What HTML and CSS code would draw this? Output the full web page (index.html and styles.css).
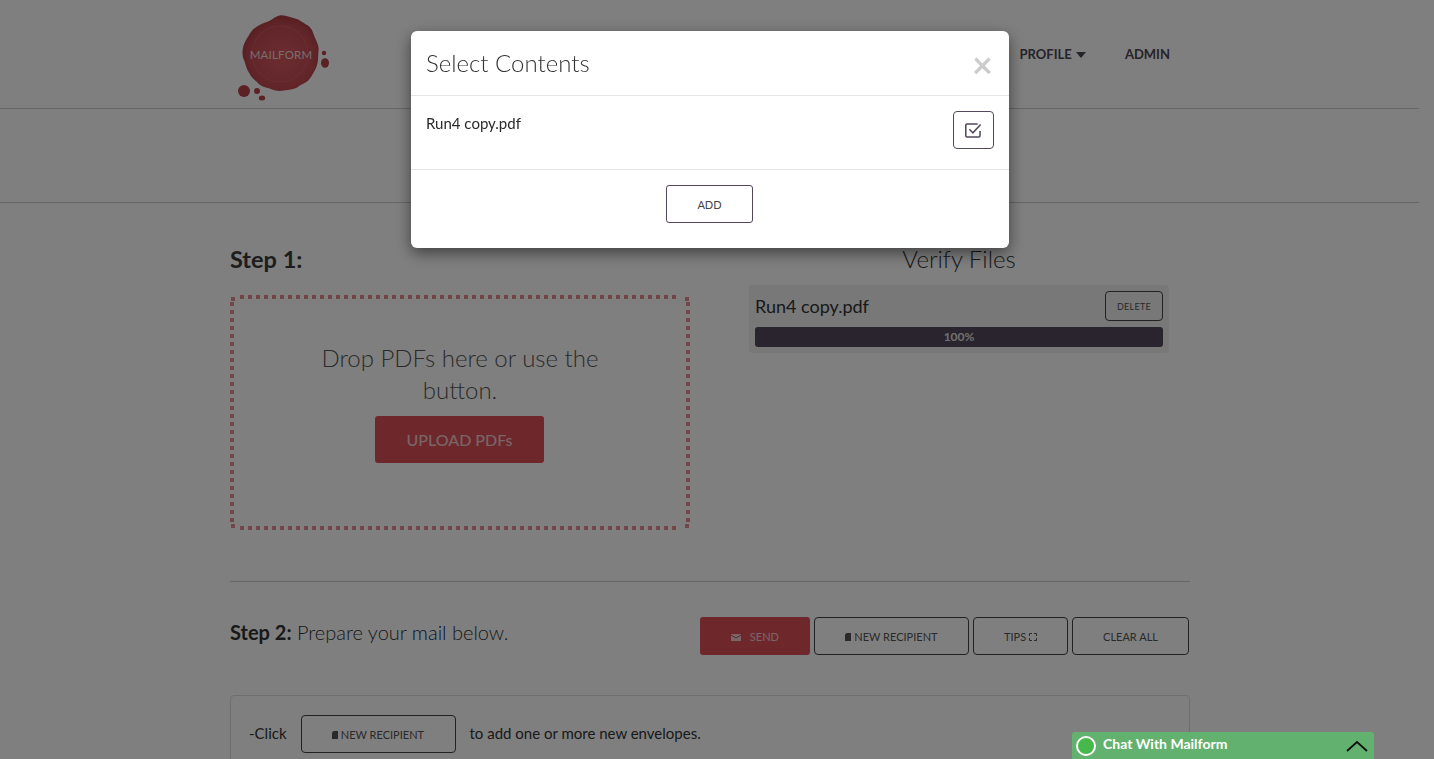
FILE: index.html
```html
<!DOCTYPE html>
<html lang="en">
<head>
<meta charset="utf-8">
<title>Mailform</title>
<link rel="stylesheet" href="styles.css">
</head>
<body>
<div class="page">
  <header class="topbar">
    <div class="topbar-inner">
      <svg class="logo" width="96" height="92" viewBox="0 0 96 92">
        <defs>
          <radialGradient id="waxFill" cx=".52" cy=".55" r=".55">
            <stop offset="0" stop-color="#d85a61"/>
            <stop offset=".75" stop-color="#c44c53"/>
            <stop offset="1" stop-color="#ab3c44"/>
          </radialGradient>
        </defs>
        <path fill="url(#waxFill)" transform="translate(42.500 39.500) scale(1.1 1) translate(-39 -39)" d="M40 1c5-1 9 2 14 3 4 1 7 4 10 6 4 2 6 6 7 10 1 3 3 7 4 11 1 4 0 8 0 12 0 5-1 9-3 13-2 3-3 7-6 10-3 3-7 4-10 7-4 2-8 2-12 3-5 1-9 0-13-2-5-1-9-3-12-7-4-3-6-7-8-11-2-4-2-8-4-12-1-4-1-8 0-12 1-4 3-8 5-11 2-4 5-8 9-10 4-3 8-3 12-6 2-2 4-3 7-4z"/>
        <circle class="wax-ring" cx="44" cy="40" r="28"/>
        <circle class="wax" cx="8" cy="77" r="6"/>
        <circle class="wax" cx="21" cy="77" r="3"/>
        <ellipse class="wax" cx="26" cy="84" rx="3.2" ry="2.5"/>
        <circle class="wax" cx="88" cy="39" r="2.2"/>
        <ellipse class="wax" cx="89" cy="49" rx="4" ry="4.800"/>
        <text class="logo-text" x="45" y="45" text-anchor="middle">MAILFORM</text>
      </svg>
      <nav class="nav">
        <a class="nav-link">PROFILE <span class="caret"></span></a>
        <a class="nav-link">ADMIN</a>
      </nav>
    </div>
  </header>
  <div class="subbar"></div>
  <main class="container">
    <section class="step-one">
      <div class="col">
        <h2 class="step-title"><b>Step 1:</b></h2>
        <div class="dropzone">
          <p class="drop-text">Drop PDFs here or use the button.</p>
          <button class="btn-upload">UPLOAD PDFs</button>
        </div>
      </div>
      <div class="col col-right">
        <h2 class="verify-title">Verify Files</h2>
        <div class="file-card">
          <div class="file-row">
            <span class="file-name">Run4 copy.pdf</span>
            <button class="btn-outline btn-delete">DELETE</button>
          </div>
          <div class="progress">100%</div>
        </div>
      </div>
    </section>
    <hr class="divider">
    <section class="step-two">
      <p class="prepare"><b>Step 2:</b> Prepare your <span class="mail">mail</span> below.</p>
      <div class="actions">
        <button class="btn-send">
          <svg class="ico-mail" width="10" height="7" viewBox="0 0 10 7"><path d="M0 0h10v7H0z" fill="currentColor"/><path d="M0 1l5 3 5-3" fill="none" stroke="#a0454b" stroke-width=".8"/></svg>
          SEND
        </button>
        <button class="btn-outline btn-recipient">
          <svg class="ico-doc" width="6" height="8" viewBox="0 0 6 8"><path d="M1.500 0H6v8H0V1.500z" fill="currentColor"/></svg>
          NEW RECIPIENT
        </button>
        <button class="btn-outline btn-tips">
          TIPS
          <svg class="ico-expand" width="8" height="8" viewBox="0 0 8 8"><path d="M.5 3V.5H3M5 .5h2.500V3M7.500 5v2.500H5M3 7.500H.5V5" fill="none" stroke="currentColor"/></svg>
        </button>
        <button class="btn-outline btn-clear">CLEAR ALL</button>
      </div>
    </section>
    <section class="hint-panel">
      <span>-Click</span>
      <button class="btn-outline btn-recipient btn-hint">
        <svg class="ico-doc" width="6" height="8" viewBox="0 0 6 8"><path d="M1.500 0H6v8H0V1.500z" fill="currentColor"/></svg>
        NEW RECIPIENT
      </button>
      <span>to add one or more new envelopes.</span>
    </section>
  </main>
</div>

<div class="backdrop"></div>

<div class="modal">
  <div class="modal-head">
    <h3 class="modal-title">Select Contents</h3>
    <span class="modal-close">×</span>
  </div>
  <div class="modal-body">
    <span class="modal-file">Run4 copy.pdf</span>
    <button class="btn-check">
      <svg width="19" height="19" viewBox="0 0 16 16"><path d="M13.500 8.500v4a1 1 0 0 1-1 1h-10a1 1 0 0 1-1-1v-9a1 1 0 0 1 1-1h9" fill="none" stroke="currentColor" stroke-width="1.300"/><path d="M4.500 7l3 3 6.500-7" fill="none" stroke="currentColor" stroke-width="1.300"/></svg>
    </button>
  </div>
  <div class="modal-foot">
    <button class="btn-add">ADD</button>
  </div>
</div>

<div class="chat">
  <span class="chat-dot"></span>
  <span class="chat-label">Chat With Mailform</span>
  <svg class="chat-arrow" width="22" height="12" viewBox="0 0 22 12"><path d="M1 11L11 2l10 9" fill="none" stroke="#111" stroke-width="1.800"/></svg>
</div>
</body>
</html>
```
FILE: styles.css
```css
* { box-sizing: border-box; }
html, body { margin: 0; height: 100%; overflow: hidden; }
body {
  background: #fff;
  color: #333;
  font-family: Lato, "Liberation Sans", sans-serif;
  font-size: 15px;
}
button { font-family: inherit; cursor: pointer; }

.page { width: 1419px; }

.topbar { height: 109px; border-bottom: 1px solid #ccc; }
.topbar-inner {
  width: 960px;
  margin-left: 230px;
  height: 100%;
  display: flex;
  justify-content: space-between;
  padding-top: 14px;
}
.logo { margin-left: 6px; }
.wax { fill: #b8434b; }
.wax-ring { fill: none; stroke: #d8626a; stroke-width: .7; }
.logo-text { fill: #f0dcdc; font-family: Lato, sans-serif; font-size: 11.500px; letter-spacing: .2px; }
.nav { display: flex; gap: 39px; padding: 32px 20px 0 0; }
.nav-link { font-size: 13px; font-weight: 700; color: #4c4654; line-height: 17px; }
.caret {
  display: inline-block;
  width: 0; height: 0;
  margin-left: 1px;
  vertical-align: 1px;
  border-left: 5px solid transparent;
  border-right: 5px solid transparent;
  border-top: 6px solid #4c4654;
}

.subbar { height: 94px; border-bottom: 1px solid #ccc; }

.container { width: 960px; margin-left: 230px; }

.step-one { display: flex; gap: 59px; padding-top: 39px; }
.col { width: 460px; }
.col-right { width: 420px; }
.step-title, .verify-title { margin: 0; font-size: 24px; line-height: 34px; }
.step-title { color: #3a3a3a; font-weight: 400; font-size: 23.500px; }
.verify-title { font-weight: 300; text-align: center; color: #333; }

.dropzone {
  --dot: #e58b93;
  position: relative;
  margin-top: 19px;
  width: 460px;
  height: 235px;
  background:
    linear-gradient(var(--dot), var(--dot)) 1px 2px / 4px 4px no-repeat,
    linear-gradient(var(--dot), var(--dot)) calc(100% - 1px) 2px / 4px 4px no-repeat,
    linear-gradient(var(--dot), var(--dot)) 1px calc(100% - 2px) / 4px 4px no-repeat,
    linear-gradient(var(--dot), var(--dot)) calc(100% - 1px) calc(100% - 2px) / 4px 4px no-repeat;
  display: flex;
  flex-direction: column;
  align-items: center;
  padding-top: 47px;
}
.dropzone::before,
.dropzone::after {
  content: "";
  position: absolute;
  pointer-events: none;
}
.dropzone::before {
  inset: 0 10px;
  background:
    linear-gradient(90deg, var(--dot) 50%, transparent 50%) 0 0 / 8px 4px repeat-x,
    linear-gradient(90deg, var(--dot) 50%, transparent 50%) 0 100% / 8px 4px repeat-x;
}
.dropzone::after {
  inset: 7px 0;
  background:
    linear-gradient(var(--dot) 50%, transparent 50%) 0 0 / 4px 8px repeat-y,
    linear-gradient(var(--dot) 50%, transparent 50%) 100% 0 / 4px 8px repeat-y;
}
.drop-text {
  margin: 0;
  width: 330px;
  text-align: center;
  font-size: 24px;
  font-weight: 300;
  line-height: 32px;
  color: #555;
}
.btn-upload {
  margin: 10px 1px 0 0;
  width: 169px;
  height: 47px;
  border: 0;
  border-radius: 3px;
  background: #dc5159;
  color: #f3c9cc;
  font-size: 16px;
  font-weight: 500;
}

.file-card {
  margin-top: 9px;
  width: 420px;
  height: 68px;
  padding: 6px;
  border-radius: 4px;
  background: #f0f0f0;
}
.file-row { display: flex; justify-content: space-between; align-items: center; height: 30px; }
.file-name { font-size: 18px; color: #333; }
.progress {
  margin-top: 6px;
  height: 20px;
  border-radius: 3px;
  background: #53495a;
  color: #e0e0e0;
  font-size: 12px;
  font-weight: 700;
  line-height: 20px;
  text-align: center;
}

.btn-outline {
  background: transparent;
  border: 1px solid #444;
  border-radius: 4px;
  color: #555;
  font-size: 11px;
  padding: 0;
  height: 38px;
}
.btn-delete { width: 58px; height: 30px; font-size: 9px; letter-spacing: .3px; }

.divider { margin: 51px 0 0; border: 0; border-top: 1px solid #ccc; }

.step-two {
  display: flex;
  justify-content: space-between;
  padding-top: 35px;
  height: 113px;
}
.prepare { margin: 3px 0 0; font-size: 20px; line-height: 24px; font-weight: 300; }
.prepare b { font-weight: 700; }
.mail { color: #06246b; }
.actions { display: flex; gap: 4px; height: 38px; margin-right: 1px; }
.btn-send {
  width: 110px;
  border: 0;
  border-radius: 3px;
  background: #dc5159;
  color: #f3c9cc;
  font-size: 11px;
}
.ico-mail { margin-right: 6px; }
.btn-recipient { width: 155px; }
.btn-tips { width: 95px; }
.btn-clear { width: 117px; }

.hint-panel {
  border: 1px solid #ddd;
  border-radius: 4px;
  height: 120px;
  padding: 19px 18px 0;
  display: flex;
  align-items: flex-start;
  gap: 14px;
  line-height: 36px;
}
.btn-hint { width: 155px; }

.backdrop {
  position: fixed;
  inset: 0;
  background: rgba(0, 0, 0, .5);
}

.modal {
  position: fixed;
  left: 411px;
  top: 31px;
  width: 598px;
  height: 217px;
  background: #fff;
  border-radius: 6px;
  box-shadow: 0 5px 15px rgba(0, 0, 0, .5);
}
.modal-head {
  height: 65px;
  border-bottom: 1px solid #e5e5e5;
  padding: 0 15px;
  display: flex;
  justify-content: space-between;
}
.modal-title {
  margin: 0;
  font-size: 24px;
  font-weight: 300;
  line-height: 63px;
  color: #333;
}
.modal-close {
  font-size: 36px;
  font-weight: 700;
  color: #ccc;
  line-height: 36px;
  padding: 15px 1px 0 0;
}
.modal-body {
  height: 74px;
  border-bottom: 1px solid #e5e5e5;
  padding: 15px;
  display: flex;
  justify-content: space-between;
  align-items: flex-start;
}
.modal-file { font-size: 15px; line-height: 25px; color: #2a2a2a; }
.btn-check {
  width: 41px;
  height: 38px;
  padding: 0;
  background: #fff;
  border: 1px solid #53495a;
  border-radius: 4px;
  color: #53495a;
  display: flex;
  align-items: center;
  justify-content: center;
}
.modal-foot {
  display: flex;
  justify-content: center;
  padding: 15px 1px 0 0;
}
.btn-add {
  width: 87px;
  height: 38px;
  background: #fff;
  border: 1px solid #53495a;
  border-radius: 3px;
  color: #444;
  font-size: 11px;
}

.chat {
  position: fixed;
  left: 1072px;
  top: 732px;
  width: 302px;
  height: 27px;
  background: #63b16f;
  border-radius: 3px 3px 0 0;
  display: flex;
  align-items: center;
  padding: 0 6px 0 4px;
}
.chat-dot {
  width: 20px;
  height: 20px;
  border-radius: 50%;
  border: 2px solid #fff;
  background: #46b94a;
}
.chat-label {
  margin: -4px 0 0 7px;
  flex: 1;
  color: #fff;
  font-size: 14px;
  font-weight: 700;
}
```
